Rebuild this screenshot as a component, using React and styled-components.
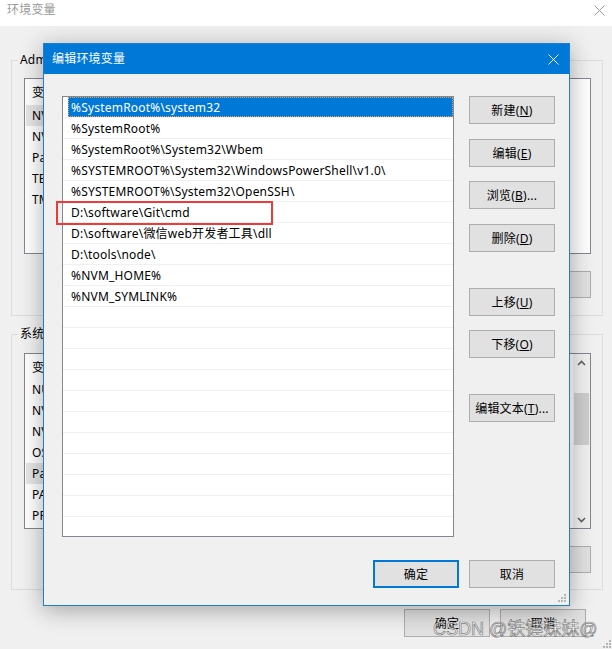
import React from 'react';
import styled, { createGlobalStyle } from 'styled-components';

const GlobalStyle = createGlobalStyle`
  html, body { margin: 0; padding: 0; background: #f0f0f0; }
  body {
    font-family: "Noto Sans", "Noto Sans CJK SC", sans-serif;
    font-size: 12px;
    letter-spacing: 0.2px;
    color: #000;
  }
  #root { width: 612px; height: 649px; overflow: hidden; }
  * { box-sizing: border-box; }
`;

const Desktop = styled.div`
  position: relative;
  width: 612px;
  height: 649px;
  overflow: hidden;
  background: #f0f0f0;
`;

/* ---------- background window ---------- */
const BgWindow = styled.div`
  display: flex;
  flex-direction: column;
  height: 100%;
`;

const BgTitleBar = styled.div`
  height: 26px;
  flex-shrink: 0;
  background: #fff;
  display: flex;
  align-items: flex-start;
  justify-content: space-between;
  padding: 2px 7px 0 7px;
  color: #9a9a9a;
  line-height: 16px;
`;

const BgClose = styled.svg`
  width: 11px;
  height: 11px;
  margin-top: 3px;
`;

const BgBody = styled.div`
  flex: 1;
  display: flex;
  flex-direction: column;
  padding: 26px 9px 0 11px;
`;

const Group = styled.fieldset`
  margin: 0;
  margin-top: ${(p) => p.$top || 0}px;
  padding: 0 11px ${(p) => p.$bottom || 16}px 12px;
  border: 1px solid #dcdcdc;
  min-width: 0;
`;

const Legend = styled.legend`
  margin-left: -6px;
  padding: 0 2px;
  line-height: 16px;
  font-size: 12px;
`;

const ListView = styled.div`
  margin-top: ${(p) => p.$top}px;
  height: 176px;
  border: 1px solid #828790;
  background: #fff;
  display: flex;
  overflow: hidden;
`;

const ListContent = styled.div`
  flex: 1;
  display: flex;
  flex-direction: column;
  padding-left: 1px;
`;

const ListHeader = styled.div`
  height: ${(p) => p.$h}px;
  display: flex;
  align-items: center;
  flex-shrink: 0;
`;

const ListRow = styled.div`
  height: 21px;
  flex-shrink: 0;
  display: flex;
  align-items: stretch;
`;

const ColName = styled.span`
  width: 170px;
  padding-left: 6px;
  white-space: nowrap;
  display: flex;
  align-items: center;
  background: ${(p) => (p.$sel ? '#e5e5e5' : 'transparent')};
`;

const ColValue = styled.span`
  flex: 1;
  padding-left: 6px;
  white-space: nowrap;
  overflow: hidden;
  display: flex;
  align-items: center;
`;

const Scrollbar = styled.div`
  width: 17px;
  display: flex;
  flex-direction: column;
  background: #f0f0f0;
`;

const ScrollArrow = styled.div`
  height: 17px;
  display: flex;
  align-items: center;
  justify-content: center;
`;

const ScrollTrack = styled.div`
  flex: 1;
  padding: 22px 1px 0 1px;
`;

const ScrollThumb = styled.div`
  height: 52px;
  background: #cdcdcd;
`;

const ButtonRow = styled.div`
  display: flex;
  justify-content: flex-end;
  gap: 10px;
  margin-top: ${(p) => p.$top || 0}px;
  padding-right: ${(p) => p.$right || 0}px;
`;

const WinButton = styled.button`
  width: ${(p) => p.$w || 86}px;
  height: ${(p) => p.$h || 28}px;
  margin: 0;
  margin-top: ${(p) => p.$top || 0}px;
  padding: 0;
  background: #e1e1e1;
  border: ${(p) => (p.$default ? '2px solid #0078d7' : '1px solid #adadad')};
  font-family: inherit;
  font-size: 12px;
  letter-spacing: 0.2px;
  color: #000;
  display: flex;
  align-items: center;
  justify-content: center;
  flex-shrink: 0;
  u { text-decoration: underline; text-underline-offset: 1px; }
`;

/* ---------- dialog ---------- */
const Dialog = styled.div`
  position: absolute;
  left: 43px;
  top: 43px;
  width: 527px;
  height: 563px;
  border: 1px solid #1c7fd1;
  background: #f0f0f0;
  box-shadow: 0 4px 22px rgba(0, 0, 0, 0.32);
  display: flex;
  flex-direction: column;
`;

const DlgTitle = styled.div`
  height: 30px;
  flex-shrink: 0;
  background: #0078d7;
  color: #fff;
  display: flex;
  align-items: center;
  justify-content: space-between;
  padding: 0 10px 0 8px;
  line-height: 16px;
`;

const DlgBody = styled.div`
  flex: 1;
  display: flex;
  flex-direction: column;
  padding: 22px 14px 17px 18px;
`;

const DlgMain = styled.div`
  display: flex;
  gap: 15px;
`;

const PathList = styled.div`
  width: 392px;
  height: 441px;
  border: 1px solid #828790;
  background: #fff;
  overflow: hidden;
  display: flex;
  flex-direction: column;
`;

const PathRow = styled.div`
  height: 21px;
  flex-shrink: 0;
  border-bottom: 1px solid #f0f0f0;
  padding-left: 5px;
  display: flex;
`;

const PathCell = styled.div`
  flex: 1;
  display: flex;
  align-items: center;
  padding-left: 2px;
  border: 1px ${(p) => (p.$sel ? 'dotted #f0a44a' : 'solid transparent')};
  background: ${(p) => (p.$sel ? '#0078d7' : 'transparent')};
  color: ${(p) => (p.$sel ? '#fff' : '#000')};
  white-space: nowrap;
`;

const SideButtons = styled.div`
  display: flex;
  flex-direction: column;
`;

const Grip = styled.svg`
  position: absolute;
  right: ${(p) => p.$r}px;
  bottom: ${(p) => p.$b}px;
  width: 10px;
  height: 10px;
`;

const Highlight = styled.div`
  position: absolute;
  left: 56px;
  top: 201px;
  width: 217px;
  height: 24px;
  border: 2px solid #ef3a3a;
  pointer-events: none;
`;

const Watermark = styled.div`
  position: absolute;
  left: 433px;
  top: 619px;
  font-family: "Liberation Sans", "Noto Sans CJK SC", sans-serif;
  font-size: 18px;
  line-height: 20px;
  letter-spacing: 0;
  color: rgba(255, 255, 255, 0.7);
  -webkit-text-stroke: 0.7px rgba(95, 95, 95, 0.8);
  white-space: nowrap;
  pointer-events: none;
`;

const Mn = ({ t, k, after = '' }) => (
  <span>
    {t}(<u>{k}</u>){after}
  </span>
);

const userVars = [
  ['NVM_HOME', 'D:\\tools\\nvm'],
  ['NVM_SYMLINK', 'D:\\tools\\node'],
  ['Path', '%USERPROFILE%\\AppData\\Local\\Microsoft\\WindowsApps;'],
  ['TEMP', '%USERPROFILE%\\AppData\\Local\\Temp'],
  ['TMP', '%USERPROFILE%\\AppData\\Local\\Temp'],
];

const sysVars = [
  ['NUMBER_OF_PROCESSORS', '8'],
  ['NVM_HOME', 'D:\\tools\\nvm'],
  ['NVM_SYMLINK', 'D:\\tools\\node'],
  ['OS', 'Windows_NT'],
  ['Path', 'C:\\Windows\\system32;C:\\Windows;'],
  ['PATHEXT', '.COM;.EXE;.BAT;.CMD;.VBS;.VBE;.JS;.JSE'],
  ['PROCESSOR_ARCHITECTURE', 'AMD64'],
];

const paths = [
  '%SystemRoot%\\system32',
  '%SystemRoot%',
  '%SystemRoot%\\System32\\Wbem',
  '%SYSTEMROOT%\\System32\\WindowsPowerShell\\v1.0\\',
  '%SYSTEMROOT%\\System32\\OpenSSH\\',
  'D:\\software\\Git\\cmd',
  'D:\\software\\微信web开发者工具\\dll',
  'D:\\tools\\node\\',
  '%NVM_HOME%',
  '%NVM_SYMLINK%',
];

const allPathRows = [...paths, ...Array(12).fill('')];

const CloseIcon = ({ color, size = 11 }) => (
  <svg width={size} height={size} viewBox="0 0 11 11">
    <path d="M0.5 0.5 L10.5 10.5 M10.5 0.5 L0.5 10.5" stroke={color} strokeWidth="1" />
  </svg>
);

const GripDots = () => (
  <>
    <rect x="7" y="1" width="2" height="2" fill="#b5b5b5" />
    <rect x="4" y="4" width="2" height="2" fill="#b5b5b5" />
    <rect x="7" y="4" width="2" height="2" fill="#b5b5b5" />
    <rect x="1" y="7" width="2" height="2" fill="#b5b5b5" />
    <rect x="4" y="7" width="2" height="2" fill="#b5b5b5" />
    <rect x="7" y="7" width="2" height="2" fill="#b5b5b5" />
  </>
);

export default function App() {
  return (
    <Desktop>
      <GlobalStyle />
      <BgWindow>
        <BgTitleBar>
          <span>环境变量</span>
          <BgClose viewBox="0 0 11 11">
            <path d="M0.5 0.5 L10.5 10.5 M10.5 0.5 L0.5 10.5" stroke="#9a9a9a" strokeWidth="1" />
          </BgClose>
        </BgTitleBar>
        <BgBody>
          <Group $bottom={17}>
            <Legend>Administrator 的用户变量(U)</Legend>
            <ListView $top={10}>
              <ListContent>
                <ListHeader $h={26}>
                  <ColName>变量</ColName>
                  <ColValue>值</ColValue>
                </ListHeader>
                {userVars.map(([n, v], i) => (
                  <ListRow key={n}>
                    <ColName $sel={i === 0}>{n}</ColName>
                    <ColValue>{v}</ColValue>
                  </ListRow>
                ))}
              </ListContent>
            </ListView>
            <ButtonRow $top={17}>
              <WinButton $h={27}><Mn t="新建" k="N" after="..." /></WinButton>
              <WinButton $h={27}><Mn t="编辑" k="E" after="..." /></WinButton>
              <WinButton $h={27}><Mn t="删除" k="D" /></WinButton>
            </ButtonRow>
          </Group>
          <Group $top={10} $bottom={16}>
            <Legend>系统变量(S)</Legend>
            <ListView $top={11}>
              <ListContent>
                <ListHeader $h={25}>
                  <ColName>变量</ColName>
                  <ColValue>值</ColValue>
                </ListHeader>
                {sysVars.map(([n, v], i) => (
                  <ListRow key={n}>
                    <ColName $sel={i === 4}>{n}</ColName>
                    <ColValue>{v}</ColValue>
                  </ListRow>
                ))}
              </ListContent>
              <Scrollbar>
                <ScrollArrow>
                  <svg width="9" height="6" viewBox="0 0 9 6">
                    <path d="M1 5 L4.5 1.5 L8 5" fill="none" stroke="#606060" strokeWidth="1.6" />
                  </svg>
                </ScrollArrow>
                <ScrollTrack>
                  <ScrollThumb />
                </ScrollTrack>
                <ScrollArrow>
                  <svg width="9" height="6" viewBox="0 0 9 6">
                    <path d="M1 1 L4.5 4.5 L8 1" fill="none" stroke="#606060" strokeWidth="1.6" />
                  </svg>
                </ScrollArrow>
              </Scrollbar>
            </ListView>
            <ButtonRow $top={17}>
              <WinButton $h={27}><Mn t="新建" k="W" after="..." /></WinButton>
              <WinButton $h={27}><Mn t="编辑" k="I" after="..." /></WinButton>
              <WinButton $h={27}><Mn t="删除" k="L" /></WinButton>
            </ButtonRow>
          </Group>
          <ButtonRow $top={19} $right={17}>
            <WinButton>确定</WinButton>
            <WinButton>取消</WinButton>
          </ButtonRow>
        </BgBody>
      </BgWindow>
      <Grip $r={0} $b={0} viewBox="0 0 10 10"><GripDots /></Grip>

      <Dialog>
        <DlgTitle>
          <span>编辑环境变量</span>
          <CloseIcon color="#fff" />
        </DlgTitle>
        <DlgBody>
          <DlgMain>
            <PathList>
              {allPathRows.map((p, i) => (
                <PathRow key={i}>
                  <PathCell $sel={i === 0}>{p}</PathCell>
                </PathRow>
              ))}
            </PathList>
            <SideButtons>
              <WinButton><Mn t="新建" k="N" /></WinButton>
              <WinButton $top={15}><Mn t="编辑" k="E" /></WinButton>
              <WinButton $top={14}><Mn t="浏览" k="B" after="..." /></WinButton>
              <WinButton $top={15}><Mn t="删除" k="D" /></WinButton>
              <WinButton $top={36}><Mn t="上移" k="U" /></WinButton>
              <WinButton $top={14}><Mn t="下移" k="O" /></WinButton>
              <WinButton $top={36}><Mn t="编辑文本" k="T" after="..." /></WinButton>
            </SideButtons>
          </DlgMain>
          <ButtonRow $top={23}>
            <WinButton $default>确定</WinButton>
            <WinButton>取消</WinButton>
          </ButtonRow>
        </DlgBody>
        <Grip $r={2} $b={2} viewBox="0 0 10 10"><GripDots /></Grip>
      </Dialog>

      <Highlight />
      <Watermark>CSDN @铁锤妹妹@</Watermark>
    </Desktop>
  );
}
